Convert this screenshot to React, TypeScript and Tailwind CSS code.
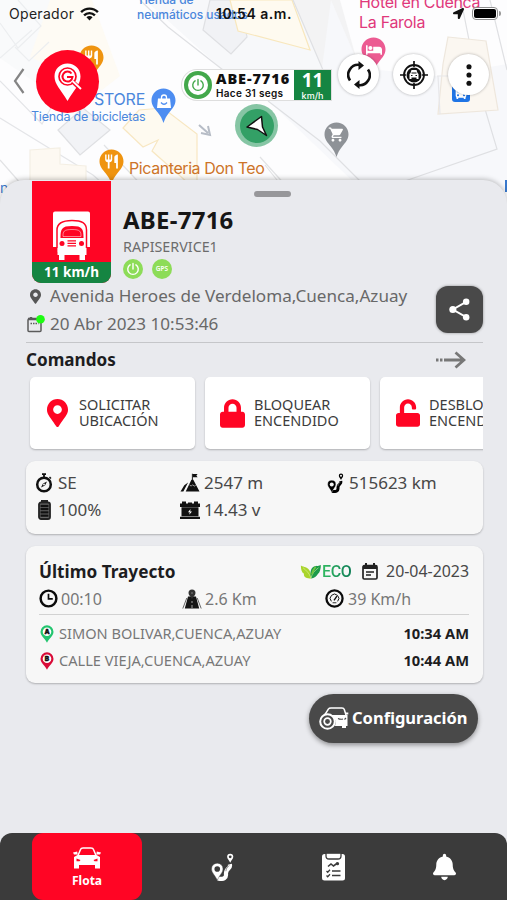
import type { ReactNode } from 'react';
import { FaBed, FaBell, FaLocationArrow, FaLock, FaMapMarkerAlt, FaUnlock } from 'react-icons/fa';
import { MdDirectionsBus, MdRestaurant, MdShoppingCart } from 'react-icons/md';

/* ---------- icons ---------- */

const Teardrop = ({ color, children }: { color: string; children: ReactNode }) => (
  <div className="relative h-[36px] w-[25px]">
    <svg viewBox="0 0 25 36" className="absolute inset-0 h-full w-full">
      <path
        d="M12.500 .5C5.800.5.5 5.700.5 12.300c0 5.200 3 8.200 6.300 12.200 2.700 3.200 4.200 6.200 5.700 10.500 1.500-4.300 3-7.300 5.700-10.500 3.300-4 6.300-7 6.300-12.200C24.500 5.700 19.200.5 12.500.5z"
        fill={color}
      />
    </svg>
    <div className="relative flex h-[25px] items-center justify-center text-white">{children}</div>
  </div>
);

const PowerIcon = ({ className }: { className: string }) => (
  <svg viewBox="0 0 24 24" className={className} fill="none" stroke="currentColor" strokeWidth="2.400" strokeLinecap="round">
    <path d="M12 2.500v9.500M7 4.800a9 9 0 1 0 10 0" />
  </svg>
);

const RouteIcon = ({ className, hole }: { className: string; hole: string }) => (
  <svg viewBox="0 0 32 40" className={className}>
    <path d="M9 36.500C18 38.500 21.500 35 21 30.500 20.500 25.500 22 24 25 21.500c2-1.600 2-3.500 1.500-5.500" fill="none" stroke="currentColor" strokeWidth="6" />
    <path d="M20.800 26c.3-5 3.200-6.500 5-8" fill="none" stroke={hole} strokeWidth="0.800" />
    <path d="M8.500 14.500a8.200 8.200 0 0 0-8.200 8.200c0 5.800 5.200 8.800 8.200 16.300 3-7.500 8.200-10.500 8.200-16.300a8.200 8.200 0 0 0-8.200-8.200z" fill="currentColor" stroke={hole} strokeWidth=".6" />
    <circle cx="8.500" cy="22.800" r="4" fill={hole} />
    <path d="M27 1a4.400 4.400 0 0 0-4.400 4.400c0 3 2.900 4.400 4.400 8.600 1.500-4.200 4.400-5.600 4.400-8.600A4.400 4.400 0 0 0 27 1z" fill="currentColor" />
    <circle cx="27" cy="5.500" r="2" fill={hole} />
  </svg>
);

const TruckIcon = () => (
  <svg viewBox="0 0 40 50" className="mb-px h-[50px] w-[40px]">
    <path d="M3 .5h33a2 2 0 0 1 2 2V36H1V2.500a2 2 0 0 1 2-2z" fill="#fff" />
    <path d="M5 49V19C5 12 10 9.500 20 9.500S34.500 12 34.500 19v30z" fill="#fff" stroke="#ff0524" strokeWidth="1.500" />
    <path d="M0 36h4.500v14H0zM35 36h5v14h-5zM4 41h31.500v10H4z" fill="#ff0524" />
    <path d="M5.500 37h29v7H33v5h-5.500v-5h-15v5H7v-5H5.500z" fill="#fff" />
    <path d="M8.500 27c0-9 1-12 11.500-12s11.500 3 11.500 12z" fill="#ff0524" />
    <path d="M11 25.500c0-5 .5-7 9-7s9 2 9 7z" fill="#ff0524" stroke="#fff" strokeWidth="0.500" />
    <circle cx="10" cy="32.500" r="2.500" fill="#ff0524" />
    <circle cx="29.500" cy="32.500" r="2.500" fill="#ff0524" />
    <path d="M15.500 29.800h8.500M15.500 32.300h8.500M15.500 34.800h8.500" stroke="#ff0524" strokeWidth="1.200" />
  </svg>
);

const CarIcon = () => (
  <svg viewBox="0 0 28 22" className="h-[22px] w-[28px]">
    <path d="M5 8.500 7.500 2.500Q8 1 10 1h8q2 0 2.500 1.500L23 8.500" fill="none" stroke="#fff" strokeWidth="1.500" />
    <path d="M0 5.500 4.200 4.500l.5 3H1zM28 5.500 23.800 4.500l-.5 3H27z" fill="#fff" />
    <path d="M4.500 8h19L27 10v11.500h-5V18H6v3.500H1V10z" fill="#fff" />
    <path d="M3.500 11.500 7.500 13l-1 1.300h-3zM24.500 11.500 20.500 13l1 1.300h3z" fill="#ff0524" />
  </svg>
);

const CarWheelIcon = () => (
  <svg viewBox="0 0 30 23" className="h-[23px] w-[30px]" fill="none" stroke="#fff">
    <path d="M6 7.500 9.500 2Q10 1 12 1h11q1.800 0 2.300 1.500L27 8" strokeWidth="1.500" />
    <path d="M10 8h18.500v11H27v2h-4v-2h-7C18 13 15 9 10 8z" fill="#fff" stroke="none" />
    <path d="M19 11.500c2 1 3.500 1 5 .5M27 11l-1.500 1.500" stroke="#4a4a4a" strokeWidth="1.100" />
    <circle cx="8.500" cy="14.500" r="7.300" strokeWidth="2" fill="#4a4a4a" />
    <circle cx="8.500" cy="14.500" r="3.300" strokeWidth="1.700" />
    <path d="M26.500 6.500h2.800" strokeWidth="2" />
  </svg>
);

const CompassIcon = () => (
  <svg viewBox="0 0 18 20" className="h-[20px] w-[18px]">
    <circle cx="9" cy="11.500" r="6.800" fill="none" stroke="#111" strokeWidth="2.500" />
    <path d="M7 1.200h4M9 1v4" stroke="#111" strokeWidth="1.800" />
    <path d="m14.500 4 1.500 1.500" stroke="#111" strokeWidth="1.500" />
    <path d="M12 8.500 10 12.500 6 14.500l2-4z" fill="#111" />
    <circle cx="9" cy="11.500" r="0.900" fill="#fff" />
  </svg>
);

const BatteryIcon = () => (
  <svg viewBox="0 0 13 20" className="h-[20px] w-[13px]">
    <path d="M3 0h7v3H3z" fill="#222" />
    <rect x="1" y="2.500" width="11" height="16.500" rx="2" fill="#666" stroke="#222" strokeWidth="1.800" />
    <path d="M2.500 6h8M2.500 9.200h8M2.500 12.400h8M2.500 15.600h8" stroke="#111" strokeWidth="2.300" />
  </svg>
);

const MountainIcon = () => (
  <svg viewBox="0 0 20 20" className="h-[19px] w-[20px]">
    <path d="M5.500 19.500 11.500 7h2L20 19.500zM0 19.500l4-6.500 4-3-5 9.500z" fill="#111" />
    <path d="M12.500 9V.8" stroke="#111" strokeWidth="1" />
    <path d="M13 1h5l-1.300 1.700L18 4.500h-5z" fill="#111" />
    <path d="m9.500 12.500 1.800 1.300 1.400-1.400 1.800 1.400 1.500-.8" fill="none" stroke="#fff" strokeWidth="0.600" />
  </svg>
);

const CarBatteryIcon = () => (
  <svg viewBox="0 0 20 18" className="h-[18px] w-[20px]">
    <path d="M0 2.500h2V.5h4v2h2v-1h4v1h2v-2h4v2h2v3.500H0zM1.500 6.300h17v9h-17zM0 15.800h20V18H0z" fill="#111" />
    <path d="m10.500 8-2.500 3.300h1.800l-.6 2.400 2.800-3.200h-1.800z" fill="#fff" />
  </svg>
);

const ClockIcon = () => (
  <svg viewBox="0 0 20 20" className="h-[19px] w-[19px]" fill="none" stroke="#0b0b0b">
    <circle cx="10" cy="10" r="8.300" strokeWidth="2.600" />
    <path d="M10 5v5.500h4.500" strokeWidth="1.800" />
  </svg>
);

const RoadIcon = () => (
  <svg viewBox="0 0 20 20" className="h-[20px] w-[20px]">
    <path d="M6 7.500h8l3.200 12H2.800z" fill="#151515" />
    <path d="M4.800 9 .8 19.500M15.200 9l4 10.500" stroke="#666" strokeWidth="1" />
    <path d="M10 12v2M10 16v3" stroke="#ddd" strokeWidth="0.700" />
    <path d="M10 .5a3.500 3.500 0 0 0-3.500 3.500c0 2.500 2.500 3.500 3.500 6 1-2.500 3.500-3.500 3.500-6A3.500 3.500 0 0 0 10 .5z" fill="#333" />
    <circle cx="10" cy="4" r="0.800" fill="#888" />
  </svg>
);

const GaugeIcon = () => (
  <svg viewBox="0 0 20 20" className="h-[19px] w-[19px]" fill="none" stroke="#0b0b0b">
    <circle cx="10" cy="10" r="8.500" strokeWidth="2.400" />
    <path d="M6.700 13a4.500 4.500 0 1 1 6.600 0" strokeWidth="1" />
    <path d="m9.500 12 3-4.500" strokeWidth="1.400" />
    <path d="M8 14.500h4" strokeWidth="0.900" />
  </svg>
);

const LeavesIcon = () => (
  <svg viewBox="0 0 22 16" className="h-[15px] w-[22px]">
    <path d="M11 15.500C5 16 3 13 3.500 10.500 1 9 .2 5.500.2 1.500c2 1.500 3.500 1 5 2C10 5.500 11.500 10 11 15.500z" fill="#a9d42c" />
    <path d="M11 15.500C9.500 7 11.500 3.500 15 2.500c2-.5 4.500-.5 6.500-1.500 0 4-1 8-3 9.500-1.500 3-4 4.500-7.500 5z" fill="#1c9b49" />
    <path d="M2.500 4C6 7 9 9.500 11 15c1-5 4-8 8-11" fill="none" stroke="#e5f6a0" strokeWidth="0.600" />
    <path d="M12 11c1-4 2-6 4-8" fill="none" stroke="#72c63f" strokeWidth="1.800" />
  </svg>
);

const CalendarIcon = () => (
  <svg viewBox="0 0 16 17" className="h-[17px] w-[16px]">
    <path d="M4 0v4M12 0v4" stroke="#222" strokeWidth="2" />
    <rect x="1" y="2.700" width="14" height="13.300" rx="1.300" fill="none" stroke="#222" strokeWidth="1.700" />
    <path d="M1 2.700h14V6H1z" fill="#222" />
    <path d="M4 9h8M4 12h5" stroke="#222" strokeWidth="1.500" />
  </svg>
);

const StopPin = ({ color, letter }: { color: string; letter: string }) => (
  <svg viewBox="0 0 14 18" className="h-[18px] w-[14px] shrink-0">
    <path d="M7 .3A6.500 6.500 0 0 0 .5 6.800C.5 11 4.500 13 7 17.700 9.500 13 13.500 11 13.500 6.800A6.500 6.500 0 0 0 7 .3z" fill={color} />
    <circle cx="7" cy="6.700" r="4.300" fill="#fff" />
    <text x="7" y="9" textAnchor="middle" fontSize="6.500" fontWeight="900" fontFamily="Inter, sans-serif" fill="#111" stroke="#111" strokeWidth=".4">
      {letter}
    </text>
  </svg>
);

const ReportIcon = () => (
  <svg viewBox="0 0 23 29" className="h-[29px] w-[23px]">
    <rect x="0" y="2" width="23" height="26.500" rx="2.500" fill="#fff" />
    <path d="M4 1.200h15V4q0 3-3 3H7Q4 7 4 4z" fill="#fff" stroke="#3b3b3b" strokeWidth="1.300" />
    <path d="m6 14.500 3-2.500 2.500 2 4-3" fill="none" stroke="#3b3b3b" strokeWidth="1.600" />
    <circle cx="15.500" cy="11.700" r="1.600" fill="#3b3b3b" />
    <path d="M10 19h8.500M10 23.500h8.500" stroke="#3b3b3b" strokeWidth="1.500" />
    <path d="m4.500 19 1.200 1.200L8 17.800M4.500 23.500l1.200 1.200L8 22.300" fill="none" stroke="#3b3b3b" strokeWidth="1.300" />
  </svg>
);

/* ---------- map ---------- */

const MapBackground = () => (
  <div className="absolute inset-x-0 top-0 h-[230px] overflow-hidden bg-[#fdfdfe] font-['Inter',sans-serif]">
    <svg viewBox="0 0 507 230" className="absolute inset-0 h-full w-full" fill="none" stroke="#dfe0e3" strokeWidth="1.200">
      <path d="M0 0h80l30 82-32 30L0 58z" fill="#f9fafb" stroke="none" />
      <path d="M50 0h42l28 76-18 14-72-33z" fill="#fefbf4" stroke="none" />
      <path d="m0 23 18 25 23-22L18 0M15 47l14 14 20-19M0 58l32-28" stroke="#eceef0" />
      <path d="M145 0h150l27 68-52 34-25-12z" fill="#f7f8fa" stroke="none" />
      <path d="m203 30 28 24 16-17-7-37h-30z" fill="#f1f2f5" />
      <path d="m230 0 8 31 72 19-18-50z" fill="#fefaf0" stroke="#f8e7bd" />
      <path d="M293 0h47l20 72-38-4z" fill="#f3f3f4" stroke="none" />
      <path d="m331 0 29 68 77 8 70-12V190H362l-92-88 52-34z" fill="#f7f8fb" stroke="none" />
      <path d="m140 0 28 27 64 50M293 0l30 70M268 101l52 40 48 48M405 181l92-32-18-60M461 0l12 60M490 0l17 70" />
      <path d="m448 37 38 4 12 69-60 4 5-50z" fill="#fbf7f1" stroke="#eee7dd" />
      <path d="m438 76 2 38M437 76h30" stroke="#e7e7ea" />
      <path d="m123 128 20 19 15-7-6 11 45 40V134l-34-26-24 2z" fill="#fefaf0" stroke="#f8e7c2" />
      <path d="m58 130 22 25 30-25-27-22z" fill="#f2f3f6" />
      <path d="m0 118 93 57 17 15M0 81l42 43 10-18" stroke="#e4e5e8" />
      <path d="m30 150 30-2v16l26 2v24H30z" fill="#fdf9f2" stroke="#f4efe4" />
      <path d="m0 160 22 25M104 145l42 45M260 157l27 30M265 165l16 20" stroke="#e2e3e5" />
      <path d="m199 125 9 8m0-7 2 9-9-2" stroke="#b6bcc6" strokeWidth="2" />
    </svg>
    <div className="absolute left-[137px] top-[-8px] text-[12px] font-medium leading-[15px] tracking-[-0.050px] text-[#4b87dc]">
      Tienda de
      <br />
      neumáticos usados
    </div>
    <div className="absolute left-[359px] top-[-8px] text-[16px] leading-[20px] tracking-[-0.300px] text-[#e0387b]">
      Hotel en Cuenca
      <br />
      La Farola
    </div>
    <div className="absolute left-[94px] top-[89px] text-[16px] leading-5 tracking-[-0.250px] text-[#4b87dc]">STORE</div>
    <div className="absolute left-[31px] top-[109px] whitespace-nowrap text-[12.500px] leading-4 tracking-[-0.200px] text-[#4b87dc]">Tienda de bicicletas</div>
    <div className="absolute left-[129px] top-[158px] whitespace-nowrap text-[16px] leading-5 tracking-[-0.420px] text-[#cd7429]">Picanteria Don Teo</div>
    <div className="absolute left-0 top-[180px] text-[14px] leading-4 text-[#3978cc]">n</div>
    <div className="absolute left-[505px] top-[180px] h-[12px] w-[2px] bg-[#3978cc]" />
    <div className="absolute left-[79px] top-[45px]">
      <Teardrop color="#ef9410"><MdRestaurant size={17} /></Teardrop>
    </div>
    <div className="absolute left-[99px] top-[149px]">
      <Teardrop color="#ef9410"><MdRestaurant size={17} /></Teardrop>
    </div>
    <div className="absolute left-[151px] top-[88px]">
      <Teardrop color="#4d8df1">
        <svg viewBox="0 0 14 14" className="h-[14px] w-[14px]">
          <path d="M4.500 5V3.500a2.500 2.500 0 0 1 5 0V5" fill="none" stroke="#fff" strokeWidth="1.300" />
          <path d="M1 4.500h12L14 14H0z" fill="#fff" />
          <path d="M4 8.500q3 3.500 6 0" fill="none" stroke="#4d8df1" strokeWidth="1.300" />
        </svg>
      </Teardrop>
    </div>
    <div className="absolute left-[361px] top-[37px]">
      <Teardrop color="#ec5b92"><FaBed size={16} /></Teardrop>
    </div>
    <div className="absolute left-[324px] top-[122px]">
      <Teardrop color="#8e9297"><MdShoppingCart size={17} /></Teardrop>
    </div>
    <div className="absolute left-[452px] top-[84px] flex h-[18px] w-[18px] items-center justify-center rounded-[3px] bg-[#1f74e5] text-white">
      <MdDirectionsBus size={16} />
    </div>
    {/* vehicle marker */}
    <div className="absolute left-[235px] top-[104px] flex h-[43px] w-[43px] items-center justify-center rounded-full bg-[#86c5a4]">
      <div className="flex h-[34px] w-[34px] items-center justify-center rounded-full bg-[#33a066]">
        <svg viewBox="0 0 22 22" className="h-[22px] w-[22px]">
          <path d="M1 12 15.500 1.500 16.500 12 20.500 20.500 11.500 14.500z" fill="#fff" stroke="#111" strokeWidth="1.500" strokeLinejoin="round" />
        </svg>
      </div>
    </div>
  </div>
);

const StatusBar = () => (
  <div className="flex h-[27px] items-center pl-[9px] pr-[6px] font-['Inter',sans-serif] text-[#222]">
    <span className="w-[67px] text-[14px] tracking-[0.300px]">Operador</span>
    <svg viewBox="0 0 20 15" className="ml-[4px] h-[14px] w-[19px]" fill="none" stroke="#111" strokeWidth="2.600">
      <path d="M1 5.500a12.700 12.700 0 0 1 18 0M4.200 9a8.200 8.200 0 0 1 11.600 0" />
      <path d="m6.700 11 3.300 3.500 3.300-3.500a4.700 4.700 0 0 0-6.600 0z" fill="#111" stroke="none" />
    </svg>
    <span className="ml-[117px] whitespace-nowrap text-[14px] font-semibold tracking-[0.500px] text-[#111]">10:54 a.m.</span>
    <FaLocationArrow className="ml-auto text-[#111]" size={11} />
    <div className="ml-[8px] h-[13px] w-[26px] rounded-[4px] border border-[#8d8d8d] bg-white p-px">
      <div className="h-full rounded-[2px] bg-black" />
    </div>
    <div className="ml-px h-[5px] w-[2px] rounded-r bg-[#999]" />
  </div>
);

const RoundButton = ({ children }: { children: ReactNode }) => (
  <button className="mt-[27px] flex h-[41px] w-[41px] items-center justify-center rounded-full bg-white shadow-[0_0_3px_rgba(0,0,0,0.3)]">
    {children}
  </button>
);

const Toolbar = () => (
  <div className="flex items-start pr-[18px]">
    <svg viewBox="0 0 12 26" className="ml-[13px] mt-[41px] h-[26px] w-[12px]" fill="none" stroke="#858585" strokeWidth="2.200">
      <path d="M10.500 1 2 13l8.500 12" />
    </svg>
    <div className="ml-[11px] mt-[23px] flex h-[63px] w-[63px] items-center justify-center rounded-full bg-[#ff0524]">
      <svg viewBox="0 0 28 38" className="h-[38px] w-[28px]">
        <path d="M13.500.5C6 .5.5 6 .5 13.500c0 8 6 12.500 13 24.500 7-12 13-16.500 13-24.500C26.500 6 21 .5 13.500.5z" fill="#fff" />
        <circle cx="13.500" cy="13.500" r="8.500" fill="none" stroke="#ff0524" strokeWidth="1.700" />
        <path d="m18.500 18.500 8.500 8" stroke="#ff0524" strokeWidth="4" />
        <path d="m18.500 18 8.500 8" stroke="#fff" strokeWidth="1.800" />
        <path d="M17.500 10.500a5 5 0 1 0 1 3.500H13" fill="none" stroke="#ff0524" strokeWidth="2" />
      </svg>
    </div>
    <div className="ml-[82px] mt-[42px] flex h-[32px] w-[151px] items-center overflow-hidden rounded-l-full rounded-r-[7px] border border-[#dedede] bg-white">
      <div className="ml-[2px] flex h-[28px] w-[28px] shrink-0 items-center justify-center rounded-full bg-[#43a84b] text-[#43a84b]">
        <div className="flex h-[20px] w-[20px] shrink-0 items-center justify-center rounded-full bg-white">
          <PowerIcon className="h-[14px] w-[14px]" />
        </div>
      </div>
      <div className="ml-[4px] w-[78px] shrink-0 whitespace-nowrap text-[#111]">
        <div className="font-['Noto_Sans',sans-serif] text-[14.500px] font-black leading-[15px] tracking-[0.900px]">ABE-7716</div>
        <div className="font-['Inter',sans-serif] text-[10px] font-semibold leading-[14px] tracking-[0.300px]">Hace 31 segs</div>
      </div>
      <div className="flex h-full flex-1 flex-col items-center bg-[#158542] text-white">
        <span className="font-['Noto_Sans',sans-serif] text-[19px] font-bold leading-[21px]">11</span>
        <span className="font-['Inter',sans-serif] text-[9px] font-medium leading-[9px]">km/h</span>
      </div>
    </div>
    <div className="ml-auto flex gap-[14px]">
      <RoundButton>
        <svg viewBox="0 0 24 30" className="h-[30px] w-[24px]" fill="none" stroke="#111" strokeWidth="2.600">
          <path d="M3 20.500A10 10 0 0 1 13 5M21 9.500A10 10 0 0 1 11 25" />
          <path d="m11.500 1 5.500 4.500-5.500 4.500zM12.500 20 7 24.500l5.500 4.500z" fill="#111" stroke="none" />
        </svg>
      </RoundButton>
      <RoundButton>
        <svg viewBox="0 0 28 28" className="h-[28px] w-[28px]" fill="none" stroke="#111">
          <circle cx="14" cy="14" r="10" strokeWidth="1.800" />
          <path d="M14 0v6M14 22v6M0 14h6M22 14h6" strokeWidth="1.700" />
          <circle cx="14" cy="14" r="7.500" fill="#111" stroke="none" />
          <path d="m10.500 12 1-3h5l1 3 1 1v5h-2v-1.500h-5V18h-2v-5z" fill="#fff" stroke="none" />
          <path d="M11.500 12h5M11 14.500h1.500M15.500 14.500H17" strokeWidth="1" />
        </svg>
      </RoundButton>
      <RoundButton>
        <svg viewBox="0 0 6 24" className="h-[22px] w-[6px]" fill="#111">
          <circle cx="3" cy="3" r="2.800" />
          <circle cx="3" cy="12" r="2.800" />
          <circle cx="3" cy="21" r="2.800" />
        </svg>
      </RoundButton>
    </div>
  </div>
);

/* ---------- sheet ---------- */

const commands = [
  { icon: <FaMapMarkerAlt className="h-[28px] w-[21px]" />, lines: ['SOLICITAR', 'UBICACIÓN'] },
  { icon: <FaLock className="h-[29px] w-[25px]" />, lines: ['BLOQUEAR', 'ENCENDIDO'] },
  { icon: <FaUnlock className="h-[28px] w-[24px]" />, lines: ['DESBLOQUEAR', 'ENCENDIDO'] },
];

const CommandCard = ({ icon, lines }: { icon: ReactNode; lines: string[] }) => (
  <div className="flex h-[72px] w-[165px] shrink-0 items-center rounded-[5px] bg-white shadow-[0_1px_2px_rgba(0,0,0,0.25)]">
    <div className="ml-[13px] flex w-[29px] justify-center text-[#ff0524]">{icon}</div>
    <div className="mb-[3px] ml-[7px] whitespace-nowrap text-[14.500px] leading-[16px] text-[#3c3c3c]">
      {lines.map((line) => (
        <div key={line}>{line}</div>
      ))}
    </div>
  </div>
);

const Stat = ({ icon, children }: { icon: ReactNode; children: ReactNode }) => (
  <div className="flex items-center gap-[4px] whitespace-nowrap">
    <span className="flex w-[20px] shrink-0 justify-center">{icon}</span>
    {children}
  </div>
);

const VehicleHeader = () => (
  <div className="flex h-[103px] pl-[6px] pt-px">
    <div className="flex h-[102px] w-[79px] flex-col overflow-hidden rounded-b-[9px] bg-[#ff0524]">
      <div className="flex h-[81px] items-end justify-center"><TruckIcon /></div>
      <div className="flex h-[21px] items-center justify-center bg-[#158542] text-[13.500px] font-bold text-white">11 km/h</div>
    </div>
    <div className="ml-[12px] mt-[22px]">
      <div className="text-[24px] font-bold leading-[34px] tracking-[0.250px] text-[#161616]">ABE-7716</div>
      <div className="text-[14.300px] leading-[20px] text-[#6c6c6c]">RAPISERVICE1</div>
      <div className="mt-[2px] flex gap-[9px]">
        <div className="flex h-[20px] w-[20px] items-center justify-center rounded-full bg-[#8ddc58] text-white">
          <PowerIcon className="h-[14px] w-[14px]" />
        </div>
        <div className="flex h-[20px] w-[20px] items-center justify-center rounded-full bg-[#8ddc58] text-[6.500px] font-semibold text-white">GPS</div>
      </div>
    </div>
  </div>
);

const LocationInfo = () => (
  <div className="flex h-[60px] border-b border-[#c5c6c9] text-[17.100px] text-[#686868]">
    <div className="flex-1 whitespace-nowrap">
      <div className="flex h-[26px] items-center">
        <FaMapMarkerAlt className="ml-[4px] h-[15px] w-[11px] text-[#565656]" />
        <span className="ml-[9px]">Avenida Heroes de Verdeloma,Cuenca,Azuay</span>
      </div>
      <div className="flex h-[29px] items-center">
        <svg viewBox="0 0 18 18" className="ml-px h-[18px] w-[18px]">
          <rect x="1" y="4" width="13" height="12.500" rx="1" fill="none" stroke="#5b5b5b" strokeWidth="1.500" />
          <path d="M1 4h13M4 2v3" stroke="#5b5b5b" strokeWidth="2.500" />
          <path d="M3.500 8.500h8" stroke="#5b5b5b" strokeWidth="1.500" strokeDasharray="1.500 1" />
          <circle cx="13.500" cy="4.300" r="4.300" fill="#1dfc12" />
        </svg>
        <span className="ml-[5px]">20 Abr 2023 10:53:46</span>
      </div>
    </div>
    <button className="mt-[3px] flex h-[47px] w-[47px] items-center justify-center rounded-[12px] bg-[#494949] shadow-[0_0_3px_rgba(0,0,0,0.4)]">
      <svg viewBox="0 0 22 24" className="h-[23px] w-[21px]" fill="#fff">
        <path d="M18 4 4 12l14 8" fill="none" stroke="#fff" strokeWidth="2" />
        <circle cx="18" cy="4" r="3.400" />
        <circle cx="4" cy="12" r="3.700" />
        <circle cx="18" cy="20" r="3.400" />
      </svg>
    </button>
  </div>
);

const Commands = () => (
  <div className="h-[118px]">
    <div className="flex h-[34px] items-center justify-between pr-[17px]">
      <h2 className="text-[17.100px] font-bold text-[#1d1d1f]">Comandos</h2>
      <svg viewBox="0 0 30 18" className="h-[18px] w-[30px]" fill="none" stroke="#777" strokeWidth="2.800">
        <path d="M0 9h2.500M4 9h2.500M8 9h20M19.500 1.500 28 9l-8.500 7.500" />
      </svg>
    </div>
    <div className="-ml-px flex h-[80px] gap-[10px] overflow-hidden pl-[5px]">
      {commands.map((command) => (
        <CommandCard key={command.lines[0]} {...command} />
      ))}
    </div>
  </div>
);

const StatsCard = () => (
  <div className="h-[73px] rounded-[9px] bg-[#f7f7f7] pl-[8px] pt-[8px] text-[17px] text-[#484848] shadow-[0_1px_2px_rgba(0,0,0,0.25)]">
    <div className="grid grid-cols-[146px_145px_1fr] grid-rows-[27px_27px] items-center">
      <Stat icon={<CompassIcon />}>SE</Stat>
      <Stat icon={<MountainIcon />}>2547 m</Stat>
      <Stat icon={<RouteIcon className="h-[20px] w-[17px] text-black" hole="#f7f7f7" />}>515623 km</Stat>
      <Stat icon={<BatteryIcon />}>100%</Stat>
      <Stat icon={<CarBatteryIcon />}>14.43 v</Stat>
    </div>
  </div>
);

const stops = [
  { letter: 'A', color: '#23c56f', place: 'SIMON BOLIVAR,CUENCA,AZUAY', time: '10:34 AM' },
  { letter: 'B', color: '#d90b38', place: 'CALLE VIEJA,CUENCA,AZUAY', time: '10:44 AM' },
];

const LastTripCard = () => (
  <div className="mt-[12px] h-[137px] rounded-[9px] bg-[#f7f7f7] pl-[13px] pr-[14px] pt-[12px] shadow-[0_1px_2px_rgba(0,0,0,0.25)]">
    <div className="flex h-[28px] items-center">
      <h2 className="text-[17.200px] font-bold text-[#1d1d1f]">Último Trayecto</h2>
      <div className="ml-auto flex items-center">
        <LeavesIcon />
        <span className="w-[32px] bg-gradient-to-r from-[#32bb61] to-[#0b7955] bg-clip-text font-['Roboto',sans-serif] text-[16px] font-medium leading-5 tracking-[-0.400px] text-transparent">
          ECO
        </span>
        <span className="ml-[8px]"><CalendarIcon /></span>
        <span className="ml-[8px] text-[15.900px] text-[#484848]">20-04-2023</span>
      </div>
    </div>
    <div className="grid h-[29px] grid-cols-[143px_143px_1fr] items-center border-b border-[#d2d2d2] pb-[3px] text-[16px] text-[#777]">
      <Stat icon={<span className="-ml-[2px]"><ClockIcon /></span>}><span className="-ml-[2px]">00:10</span></Stat>
      <Stat icon={<RoadIcon />}><span className="-ml-px">2.6 Km</span></Stat>
      <Stat icon={<span className="-ml-px"><GaugeIcon /></span>}><span className="-ml-px">39 Km/h</span></Stat>
    </div>
    <div className="pt-[5px]">
      {stops.map((stop) => (
        <div key={stop.letter} className="flex h-[27px] items-center text-[14.600px] text-[#777]">
          <span className="ml-px"><StopPin color={stop.color} letter={stop.letter} /></span>
          <span className="ml-[5px] whitespace-nowrap">{stop.place}</span>
          <span className="ml-auto text-[14.700px] font-bold text-[#1d1d1f]">{stop.time}</span>
        </div>
      ))}
    </div>
  </div>
);

const BottomNav = () => (
  <nav className="relative z-10 flex h-[67px] shrink-0 items-center rounded-t-[12px] bg-[#3b3b3b] pl-[32px] text-white">
    <div className="mr-[25px] flex h-[67px] w-[110px] flex-col items-center rounded-[11px] bg-[#ff0524] pt-[14px]">
      <CarIcon />
      <span className="mt-[3px] text-[12px] font-bold leading-[18px]">Flota</span>
    </div>
    <div className="flex w-[111px] justify-center"><RouteIcon className="h-[28px] w-[23px]" hole="#3b3b3b" /></div>
    <div className="flex w-[111px] justify-center"><ReportIcon /></div>
    <div className="flex w-[111px] justify-center"><FaBell className="h-[28px] w-[23px]" /></div>
  </nav>
);

export default function App() {
  return (
    <div className="relative flex h-[900px] w-[507px] flex-col overflow-hidden bg-[#3b3b3b] font-['Noto_Sans',sans-serif]">
      <MapBackground />
      <header className="relative h-[180px] shrink-0">
        <StatusBar />
        <Toolbar />
      </header>
      <main className="relative -mb-[14px] flex-1 rounded-t-[24px] bg-[#e9eaee] pl-[26px] pr-[24px] shadow-[0_-1px_5px_rgba(0,0,0,0.25)]">
        <div className="absolute left-[254px] top-[11px] h-[6px] w-[37px] rounded-full bg-[#97979a]" />
        <VehicleHeader />
        <LocationInfo />
        <Commands />
        <StatsCard />
        <LastTripCard />
        <button className="ml-auto mr-[5px] mt-[11px] flex h-[49px] w-[169px] items-center rounded-full bg-[#494949] pl-[10px] text-[16.500px] font-bold text-white shadow-[0_2px_5px_rgba(0,0,0,0.4)]">
          <CarWheelIcon />
          <span className="ml-[3px]">Configuración</span>
        </button>
      </main>
      <BottomNav />
    </div>
  );
}
